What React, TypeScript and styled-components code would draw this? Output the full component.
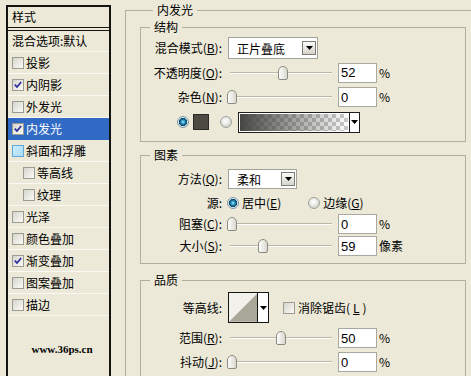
import * as React from "react";
import styled, { createGlobalStyle } from "styled-components";

const GlobalStyle = createGlobalStyle`
  html, body {
    margin: 0;
    padding: 0;
    background: #ece9d8;
  }
  body {
    font-family: "Noto Sans CJK SC", "DejaVu Sans", sans-serif;
    font-size: 12px;
    color: #000;
  }
`;

const layerStyles = [
  { name: "投影" },
  { name: "内阴影", checked: true },
  { name: "外发光" },
  { name: "内发光", checked: true, selected: true },
  { name: "斜面和浮雕", hot: true },
  { name: "等高线", indent: true },
  { name: "纹理", indent: true },
  { name: "光泽" },
  { name: "颜色叠加" },
  { name: "渐变叠加", checked: true },
  { name: "图案叠加" },
  { name: "描边" },
];

const App: React.FC = () => {
  return (
    <>
      <GlobalStyle />
      <Dialog>
        <StylePanel>
          <PanelHeader>样式</PanelHeader>
          <BlendRow>混合选项:默认</BlendRow>
          {layerStyles.map((s) => (
            <StyleItem key={s.name} $selected={s.selected} $indent={s.indent}>
              <CheckBox checked={s.checked} hot={s.hot} />
              {s.name}
            </StyleItem>
          ))}
          <SiteMark>www.36ps.cn</SiteMark>
        </StylePanel>

        <OuterGroup>
          <OuterTitle>内发光</OuterTitle>

          <Group $top={3}>
            <GroupTitle>结构</GroupTitle>
            <GroupBody $pt={2} $pb={6}>
              <Row $h={24}>
                <Label>
                  混合模式(<Key>B</Key>):
                </Label>
                <Select $w={90} $h={22}>
                  正片叠底
                  <DropButton />
                </Select>
              </Row>
              <Row $h={25}>
                <Label>
                  不透明度(<Key>O</Key>):
                </Label>
                <Slider pos={0.52} />
                <NumField defaultValue="52" readOnly />
                <Unit>%</Unit>
              </Row>
              <Row $h={24}>
                <Label>
                  杂色(<Key>N</Key>):
                </Label>
                <Slider pos={0} />
                <NumField defaultValue="0" readOnly />
                <Unit>%</Unit>
              </Row>
              <Row $h={26} $indent={36}>
                <Radio $on />
                <Swatch />
                <Radio $gap={11} />
                <GradientPicker>
                  <GradientPreview />
                  <PickerArrow>
                    <Triangle />
                  </PickerArrow>
                </GradientPicker>
              </Row>
            </GroupBody>
          </Group>

          <Group $top={6}>
            <GroupTitle>图素</GroupTitle>
            <GroupBody $pt={5} $pb={5}>
              <Row $h={24}>
                <Label>
                  方法(<Key>Q</Key>):
                </Label>
                <Select $w={69} $h={20}>
                  柔和
                  <DropButton />
                </Select>
              </Row>
              <Row $h={23}>
                <Label>源:</Label>
                <Radio $on $gap={5} />
                <RadioText>
                  居中(<Key>E</Key>)
                </RadioText>
                <Radio $gap={27} />
                <RadioText>
                  边缘(<Key>G</Key>)
                </RadioText>
              </Row>
              <Row $h={20}>
                <Label>
                  阻塞(<Key>C</Key>):
                </Label>
                <Slider pos={0} />
                <NumField defaultValue="0" readOnly />
                <Unit>%</Unit>
              </Row>
              <Row $h={24}>
                <Label>
                  大小(<Key>S</Key>):
                </Label>
                <Slider pos={0.316} />
                <NumField defaultValue="59" readOnly />
                <Unit>像素</Unit>
              </Row>
            </GroupBody>
          </Group>

          <Group $top={9}>
            <GroupTitle>品质</GroupTitle>
            <GroupBody $pt={3} $pb={10}>
              <Row $h={35}>
                <Label>等高线:</Label>
                <ContourPicker>
                  <ContourPreview viewBox="0 0 29 29" width="29" height="29">
                    <polygon points="0,29 29,0 29,29" fill="#a9a799" />
                  </ContourPreview>
                  <ContourArrow>
                    <Triangle />
                  </ContourArrow>
                </ContourPicker>
                <AntiAlias>
                  <CheckBox />
                  消除锯齿(<Key>L</Key>)
                </AntiAlias>
              </Row>
              <Row $h={26}>
                <Label>
                  范围(<Key>R</Key>):
                </Label>
                <Slider pos={0.5} />
                <NumField defaultValue="50" readOnly />
                <Unit>%</Unit>
              </Row>
              <Row $h={22}>
                <Label>
                  抖动(<Key>J</Key>):
                </Label>
                <Slider pos={0} />
                <NumField defaultValue="0" readOnly />
                <Unit>%</Unit>
              </Row>
            </GroupBody>
          </Group>
        </OuterGroup>
      </Dialog>
    </>
  );
};

export default App;

/* ---------- small controls ---------- */

const CheckBox: React.FC<{ checked?: boolean; hot?: boolean }> = ({ checked, hot }) => (
  <CheckFrame $hot={hot}>
    {checked && (
      <svg width="10" height="10" viewBox="0 0 10 10">
        <path d="M1.8 4.6 L4 7 L8.2 2" fill="none" stroke="#2b2b9c" strokeWidth="1.7" />
      </svg>
    )}
  </CheckFrame>
);

const Slider: React.FC<{ pos: number }> = ({ pos }) => (
  <SliderTrack>
    <Thumb style={{ left: `${Math.round(pos * 98)}px` }} />
  </SliderTrack>
);

const DropButton: React.FC = () => (
  <DropFace>
    <Triangle />
  </DropFace>
);

const Triangle: React.FC = () => (
  <svg width="7" height="4" viewBox="0 0 7 4">
    <polygon points="0,0 7,0 3.5,4" fill="#000" />
  </svg>
);

/* ---------- styles ---------- */

const Dialog = styled.div`
  display: flex;
  align-items: flex-start;
  width: 471px;
  height: 376px;
  overflow: hidden;
  background: #ece9d8;
`;

const StylePanel = styled.div`
  flex-shrink: 0;
  display: flex;
  flex-direction: column;
  width: 105px;
  height: 390px;
  box-sizing: border-box;
  margin: 5px 0 0 6px;
  border: 2px solid #141414;
`;

const PanelHeader = styled.div`
  height: 20px;
  line-height: 20px;
  padding-left: 4px;
  border-bottom: 4px double #141414;
`;

const BlendRow = styled.div`
  height: 20px;
  line-height: 20px;
  padding-left: 4px;
  border-bottom: 1px solid #faf9f3;
`;

const StyleItem = styled.div<{ $selected?: boolean; $indent?: boolean }>`
  display: flex;
  align-items: center;
  gap: 2px;
  height: 22px;
  box-sizing: border-box;
  padding-left: ${(p) => (p.$indent ? 15 : 4)}px;
  border-bottom: 1px solid ${(p) => (p.$selected ? "#316ac5" : "#faf9f3")};
  background: ${(p) => (p.$selected ? "#316ac5" : "transparent")};
  color: ${(p) => (p.$selected ? "#fff" : "#000")};
  white-space: nowrap;
`;

const CheckFrame = styled.span<{ $hot?: boolean }>`
  flex-shrink: 0;
  display: inline-flex;
  align-items: center;
  justify-content: center;
  width: 12px;
  height: 12px;
  box-sizing: border-box;
  border: 1px solid ${(p) => (p.$hot ? "#62a6d6" : "#9c9b93")};
  background: ${(p) =>
    p.$hot
      ? "linear-gradient(135deg, #cdeefc, #a9dbf5)"
      : "linear-gradient(135deg, #d6d5cc, #fbfbf8)"};
`;

const SiteMark = styled.div`
  margin-top: 26px;
  padding-left: 7px;
  line-height: 14px;
  text-align: center;
  font-family: "Liberation Serif", serif;
  font-weight: bold;
  font-size: 11px;
`;

const OuterGroup = styled.fieldset`
  flex-shrink: 0;
  margin: 3px 0 0 14px;
  padding: 0 0 0 14px;
  width: 360px;
  height: 420px;
  box-sizing: border-box;
  border: 1px solid #b2af9f;
  min-inline-size: 0;
`;

const OuterTitle = styled.legend`
  margin-left: 13px;
  padding: 0 4px;
  height: 14px;
  line-height: 14px;
`;

const Group = styled.fieldset<{ $top: number }>`
  margin: ${(p) => p.$top}px 0 0 0;
  padding: 0;
  width: 326px;
  box-sizing: border-box;
  border: 1px solid #b2af9f;
  min-inline-size: 0;
`;

const GroupTitle = styled.legend`
  margin-left: 9px;
  padding: 0 4px;
  height: 14px;
  line-height: 14px;
`;

const GroupBody = styled.div<{ $pt: number; $pb: number }>`
  display: flex;
  flex-direction: column;
  padding: ${(p) => p.$pt}px 0 ${(p) => p.$pb}px 0;
`;

const Row = styled.div<{ $h: number; $indent?: number }>`
  display: flex;
  align-items: center;
  height: ${(p) => p.$h}px;
  padding-left: ${(p) => p.$indent ?? 0}px;
  white-space: nowrap;
`;

const Label = styled.span`
  flex-shrink: 0;
  width: 81px;
  text-align: right;
  line-height: 14px;
`;

const Key = styled.span`
  text-decoration: underline;
  text-underline-offset: 1px;
`;

const Select = styled.div<{ $w: number; $h: number }>`
  display: flex;
  align-items: center;
  justify-content: space-between;
  width: ${(p) => p.$w}px;
  height: ${(p) => p.$h}px;
  box-sizing: border-box;
  margin-left: 6px;
  padding: 0 1px 0 8px;
  border: 1px solid #a3a29b;
  background: #fff;
`;

const DropFace = styled.span`
  display: flex;
  align-items: center;
  justify-content: center;
  width: 14px;
  height: 14px;
  box-sizing: border-box;
  border: 1px solid #7d7c76;
  background: linear-gradient(#fbfbf8, #d4d3cb);
`;

const SliderTrack = styled.div`
  position: relative;
  flex-shrink: 0;
  width: 108px;
  height: 14px;
  margin-left: 5px;

  &::before {
    content: "";
    position: absolute;
    left: 3px;
    right: 3px;
    top: 6px;
    height: 1px;
    background: #b9b7aa;
    border-bottom: 1px solid #fdfdfa;
  }
`;

const Thumb = styled.span`
  position: absolute;
  top: 0;
  width: 10px;
  height: 14px;
  box-sizing: border-box;
  border: 1px solid #8d8c84;
  border-radius: 5px 5px 2px 2px;
  background: linear-gradient(90deg, #fdfdfb, #d9d8cf);
`;

const NumField = styled.input`
  flex-shrink: 0;
  width: 39px;
  height: 20px;
  box-sizing: border-box;
  margin: 0 0 0 3px;
  padding: 0 0 0 2px;
  border: 1px solid #a8a7a0;
  background: #fff;
  font-family: "Liberation Sans", Arial, sans-serif;
  font-size: 13px;
  color: #000;
  outline: none;
`;

const Unit = styled.span`
  margin-left: 2px;
  line-height: 14px;
`;

const Radio = styled.span<{ $on?: boolean; $gap?: number }>`
  flex-shrink: 0;
  width: 12px;
  height: 12px;
  box-sizing: border-box;
  margin-left: ${(p) => p.$gap ?? 0}px;
  border-radius: 50%;
  border: 1px solid ${(p) => (p.$on ? "#7e97a8" : "#a3a39c")};
  background: ${(p) =>
    p.$on
      ? "radial-gradient(circle at 50% 50%, #a9ecff 0, #3aa3cf 1.6px, #0e5a80 3.2px, #0b4664 3.8px, #d9e6ec 4.4px, #f4f4f2 6px)"
      : "radial-gradient(circle at 45% 40%, #ffffff 0, #eeeeea 3px, #cfcfc8 6px)"};
`;

const RadioText = styled.span`
  margin-left: 3px;
  line-height: 14px;
`;

const Swatch = styled.span`
  flex-shrink: 0;
  width: 16px;
  height: 16px;
  box-sizing: border-box;
  margin-left: 4px;
  border: 1px solid #2a2a26;
  background: #4b4a43;
`;

const GradientPicker = styled.div`
  flex-shrink: 0;
  display: flex;
  width: 122px;
  height: 21px;
  box-sizing: border-box;
  margin-left: 6px;
  border: 1px solid #1e1e1e;
  background: #fff;
`;

const GradientPreview = styled.span`
  flex: 1;
  margin: 1px;
  background:
    linear-gradient(90deg, rgba(70, 70, 66, 1), rgba(70, 70, 66, 0)),
    repeating-conic-gradient(#c9c9c9 0 25%, #ffffff 0 50%) 0 0 / 8px 8px;
`;

const PickerArrow = styled.span`
  display: flex;
  align-items: center;
  justify-content: center;
  width: 9px;
  border-left: 1px solid #1e1e1e;
  background: #fff;
`;

const ContourPicker = styled.div`
  flex-shrink: 0;
  display: flex;
  width: 41px;
  height: 31px;
  box-sizing: border-box;
  margin-left: 6px;
  border: 1px solid #141414;
  background: #f2f1eb;
`;

const ContourPreview = styled.svg`
  display: block;
`;

const ContourArrow = styled.span`
  display: flex;
  align-items: center;
  justify-content: center;
  width: 10px;
  border-left: 1px solid #141414;
  background: #fff;
`;

const AntiAlias = styled.span`
  display: flex;
  align-items: center;
  gap: 3px;
  margin-left: 14px;
  line-height: 14px;
`;
